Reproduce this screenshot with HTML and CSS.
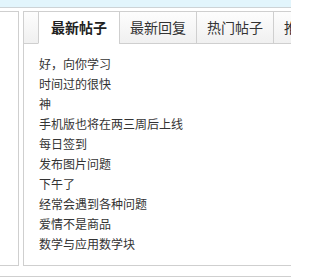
FILE: index.html
```html
<!DOCTYPE html>
<html lang="zh-CN">
<head>
<meta charset="utf-8">
<title>论坛</title>
<link rel="stylesheet" href="styles.css">
</head>
<body>
<div class="page">
  <div class="topbar"></div>
  <div class="main">
    <div class="side"></div>
    <div class="panel">
      <div class="tabs">
        <div class="tab-spacer"></div>
        <div class="tab active">最新帖子</div>
        <div class="tab">最新回复</div>
        <div class="tab">热门帖子</div>
        <div class="tab">推荐帖子</div>
        <div class="tab-fill"></div>
      </div>
      <ul class="list">
        <li>好，向你学习</li>
        <li>时间过的很快</li>
        <li>神</li>
        <li>手机版也将在两三周后上线</li>
        <li>每日签到</li>
        <li>发布图片问题</li>
        <li>下午了</li>
        <li>经常会遇到各种问题</li>
        <li>爱情不是商品</li>
        <li>数学与应用数学块</li>
      </ul>
    </div>
  </div>
  <div class="footer"></div>
</div>
</body>
</html>
```
FILE: styles.css
```css
html, body {
  margin: 0;
  padding: 0;
  background: #fff;
  overflow: hidden;
}
body {
  font-family: "Noto Sans CJK SC", "Noto Sans", sans-serif;
  color: #333;
}
.page {
  width: 291px;
  height: 278px;
  overflow: hidden;
}
.topbar {
  height: 7px;
  background: #e2f5fc;
  border-bottom: 1px solid #cdd3d6;
}
.main {
  display: flex;
  gap: 4px;
  margin-top: 3px;
}
.side {
  flex: none;
  box-sizing: border-box;
  width: 69px;
  height: 255px;
  margin-left: -50px;
  border: 1px solid #cfcfcf;
}
.panel {
  flex: none;
  box-sizing: border-box;
  width: 420px;
  height: 255px;
  border: 1px solid #cfcfcf;
}
.tabs {
  display: flex;
  height: 32px;
}
.tab-spacer {
  width: 14px;
  flex: none;
  box-sizing: border-box;
  border-bottom: 1px solid #cfcfcf;
  background: linear-gradient(#fdfdfd, #f0f0f0);
}
.tab-fill {
  flex: 1;
  box-sizing: border-box;
  border-left: 1px solid #cfcfcf;
  border-bottom: 1px solid #cfcfcf;
  background: linear-gradient(#fdfdfd, #f0f0f0);
}
.tab {
  flex: none;
  box-sizing: border-box;
  padding: 0 10px;
  border-left: 1px solid #cfcfcf;
  border-bottom: 1px solid #cfcfcf;
  background: linear-gradient(#fdfdfd, #f0f0f0);
  font-size: 14px;
  line-height: 31px;
  color: #333;
  white-space: nowrap;
}
.tab.active {
  padding: 0 12px;
  background: #fff;
  border-bottom-color: transparent;
  font-weight: bold;
  color: #222;
}
.list {
  list-style: none;
  margin: 10px 0 0;
  padding: 0 0 0 15px;
}
.list li {
  font-size: 12px;
  line-height: 20px;
  height: 20px;
  color: #333;
}
.footer {
  margin-top: 10px;
  border-top: 1px solid #cfcfcf;
  height: 10px;
}
```
